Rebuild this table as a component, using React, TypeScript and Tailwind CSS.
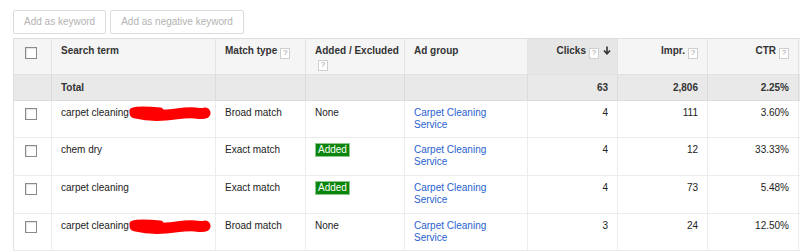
const font = { fontFamily: '"Liberation Sans", Arial, sans-serif' }

type Row = {
  term: string
  hidden: boolean
  match: string
  added: boolean
  clicks: string
  impr: string
  ctr: string
  h: string
}

const rows: Row[] = [
  { term: 'carpet cleaning', hidden: true, match: 'Broad match', added: false, clicks: '4', impr: '111', ctr: '3.60%', h: 'h-[37px]' },
  { term: 'chem dry', hidden: false, match: 'Exact match', added: true, clicks: '4', impr: '12', ctr: '33.33%', h: 'h-[38px]' },
  { term: 'carpet cleaning', hidden: false, match: 'Exact match', added: true, clicks: '4', impr: '73', ctr: '5.48%', h: 'h-[38px]' },
  { term: 'carpet cleaning', hidden: true, match: 'Broad match', added: false, clicks: '3', impr: '24', ctr: '12.50%', h: 'h-[37px]' },
]

function Help() {
  return (
    <span className="inline-flex items-center justify-center w-[10px] h-[11px] border border-[#cfcfcf] bg-white text-[8px] leading-none text-[#999] font-normal align-[-1px] ml-[3px]">
      ?
    </span>
  )
}

function Check() {
  return <span className="block w-[12px] h-[12px] border border-[#8a8a8a] bg-white shadow-[inset_1px_1px_1px_rgba(0,0,0,0.12)]" />
}

// red marker over the hidden part of a search term
function Scribble() {
  return (
    <svg width="84" height="18" viewBox="0 0 84 18" className="absolute left-[67px] top-[-3px]">
      <path d="M7 9 C 16 11, 26 12, 38 11 C 50 10, 58 8, 67 9 C 72 9.5, 75 10, 77 9" stroke="#ff0000" strokeWidth="11" strokeLinecap="round" fill="none" />
      <path d="M5 7 C 12 5, 22 6, 32 7" stroke="#ff0000" strokeWidth="7" strokeLinecap="round" fill="none" />
    </svg>
  )
}

export default function App() {
  const th = 'border-r border-b border-[#e2e2e2] align-top pt-[6px] px-[9px] font-bold text-[#333] whitespace-nowrap'
  const td = 'border-r border-b border-[#ececec] align-top pt-[6px] px-[9px]'
  return (
    <div className="w-[800px] h-[252px] overflow-hidden bg-white text-[10px] leading-[12px] text-[#222]" style={font}>
      <div className="flex gap-[4px] pl-[13px] pt-[10px] h-[38px]">
        <button className="h-[24px] px-[10px] border border-[#dcdcdc] bg-white text-[#b3b3b3] rounded-[2px]">Add as keyword</button>
        <button className="h-[24px] px-[10px] border border-[#dcdcdc] bg-white text-[#b3b3b3] rounded-[2px]">Add as negative keyword</button>
      </div>
      <div className="pl-[13px]">
        <table className="table-fixed border-collapse border-l border-t border-[#dedede] w-[880px]">
          <colgroup>
            <col className="w-[38px]" />
            <col className="w-[164px]" />
            <col className="w-[90px]" />
            <col className="w-[99px]" />
            <col className="w-[123px]" />
            <col className="w-[90px]" />
            <col className="w-[90px]" />
            <col className="w-[91px]" />
            <col className="w-[95px]" />
          </colgroup>
          <thead>
            <tr className="h-[36px] bg-[#f5f5f5]">
              <th className={th + ' pl-[11px] pt-[8px]'}><Check /></th>
              <th className={th + ' text-left'}>Search term</th>
              <th className={th + ' text-left'}>Match type<Help /></th>
              <th className={th + ' text-left'}>Added / Excluded<br /><Help /></th>
              <th className={th + ' text-left'}>Ad group</th>
              <th className={th + ' text-right bg-[#e6e6e6] pr-[6px]'}>
                Clicks<Help />
                <svg width="8" height="9" viewBox="0 0 8 9" className="inline ml-[4px] align-[-1px]">
                  <path d="M4 0.5 V7.5 M1 4.5 L4 7.8 L7 4.5" stroke="#333" strokeWidth="1.6" fill="none" />
                </svg>
              </th>
              <th className={th + ' text-right'}>Impr.<Help /></th>
              <th className={th + ' text-right'}>CTR<Help /></th>
              <th className={th + ' text-left'}></th>
            </tr>
          </thead>
          <tbody>
            <tr className="h-[26px] bg-[#e9e9e9] font-bold text-[#333]">
              <td className="border-r border-b border-[#dcdcdc]"></td>
              <td className="border-r border-b border-[#dcdcdc] px-[9px]">Total</td>
              <td className="border-r border-b border-[#dcdcdc]"></td>
              <td className="border-r border-b border-[#dcdcdc]"></td>
              <td className="border-r border-b border-[#dcdcdc]"></td>
              <td className="border-r border-b border-[#dcdcdc] px-[9px] text-right">63</td>
              <td className="border-r border-b border-[#dcdcdc] px-[9px] text-right">2,806</td>
              <td className="border-r border-b border-[#dcdcdc] px-[9px] text-right">2.25%</td>
              <td className="border-r border-b border-[#dcdcdc]"></td>
            </tr>
            {rows.map((r, i) => (
              <tr key={i} className={r.h}>
                <td className={td + ' pl-[11px] pt-[7px]'}><Check /></td>
                <td className={td}>
                  <span className="relative inline-block">
                    {r.term}
                    {r.hidden && <Scribble />}
                  </span>
                </td>
                <td className={td}>{r.match}</td>
                <td className={td}>
                  {r.added ? (
                    <span className="inline-block bg-[#08850a] text-white border border-[#8fc98f] px-[2px] leading-[12px] mt-[-1px]">Added</span>
                  ) : (
                    'None'
                  )}
                </td>
                <td className={td}>
                  <a className="text-[#2a62d0]">Carpet Cleaning<br />Service</a>
                </td>
                <td className={td + ' text-right'}>{r.clicks}</td>
                <td className={td + ' text-right'}>{r.impr}</td>
                <td className={td + ' text-right'}>{r.ctr}</td>
                <td className={td}></td>
              </tr>
            ))}
          </tbody>
        </table>
      </div>
    </div>
  )
}
